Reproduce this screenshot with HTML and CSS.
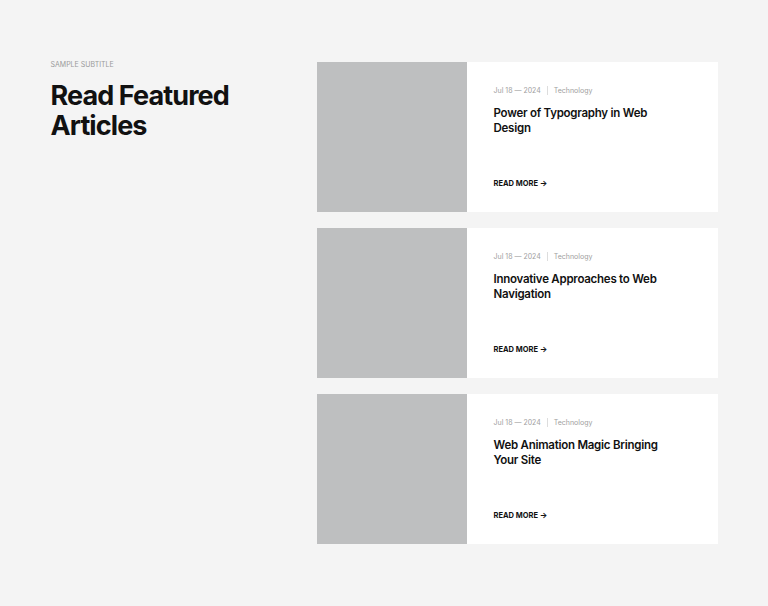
FILE: index.html
```html
<!DOCTYPE html>
<html lang="en">
<head>
  <meta charset="UTF-8" />
  <meta name="viewport" content="width=device-width, initial-scale=1.0">
  <title>Read Featured Articles</title>
  <link rel="stylesheet" href="styles.css">
</head>
<body>
  <div class="container">
    <!-- heading -->
    <div class="intro">
      <p class="subtitle">SAMPLE SUBTITLE</p>
      <h1>Read Featured Articles</h1>
    </div>

    <!-- articles -->
    <div class="list">
      <div class="card">
        <div class="thumb"></div>
        <div class="body">
          <div class="meta"><span>Jul 18 — 2024</span><span class="sep"></span><span>Technology</span></div>
          <h3>Power of Typography in Web Design</h3>
          <a class="more" href="#">READ MORE <span class="arrow">→</span></a>
        </div>
      </div>
      <div class="card">
        <div class="thumb"></div>
        <div class="body">
          <div class="meta"><span>Jul 18 — 2024</span><span class="sep"></span><span>Technology</span></div>
          <h3>Innovative Approaches to Web Navigation</h3>
          <a class="more" href="#">READ MORE <span class="arrow">→</span></a>
        </div>
      </div>
      <div class="card">
        <div class="thumb"></div>
        <div class="body">
          <div class="meta"><span>Jul 18 — 2024</span><span class="sep"></span><span>Technology</span></div>
          <h3>Web Animation Magic Bringing Your Site</h3>
          <a class="more" href="#">READ MORE <span class="arrow">→</span></a>
        </div>
      </div>
    </div>
  </div>
</body>
</html>
```

FILE: styles.css
```css
body {
  margin: 0;
  font-family: Inter, 'Noto Sans', sans-serif;
  background: #f4f4f4;
  color: #111;
}
.container {
  max-width: 667px;
  margin: 0 auto;
  padding-top: 60px;
  display: grid;
  grid-template-columns: 266px 1fr;
}
.list {
  margin-top: 2px;
  display: flex;
  flex-direction: column;
  gap: 16px;
}
.subtitle {
  margin: 0 0 12px;
  font-size: 7px;
  color: #9a9a9a;
}
h1 {
  margin: 0;
  font-size: 27px;
  line-height: 30px;
  font-weight: 700;
  letter-spacing: -0.9px;
  width: 200px;
}
.card {
  display: flex;
  height: 150px;
  background: white;
}
.thumb {
  width: 150px;
  background: #bebfc0;
}
.body {
  flex: 1;
  padding: 24px 26px 24px 27px;
  display: flex;
  flex-direction: column;
}
.meta {
  display: flex;
  align-items: center;
  font-size: 7px;
  color: #a0a0a0;
}
.sep {
  width: 1px;
  height: 9px;
  background: #ddd;
  margin: 0 6px;
}
h3 {
  margin: 11px 0 0;
  font-size: 11.5px;
  line-height: 15px;
  font-weight: 600;
  letter-spacing: -0.25px;
  width: 172px;
}
.more {
  margin-top: auto;
  font-size: 7.5px;
  font-weight: 700;
  color: #111;
  text-decoration: none;
}
.arrow {
  font-size: 8px;
}
```
